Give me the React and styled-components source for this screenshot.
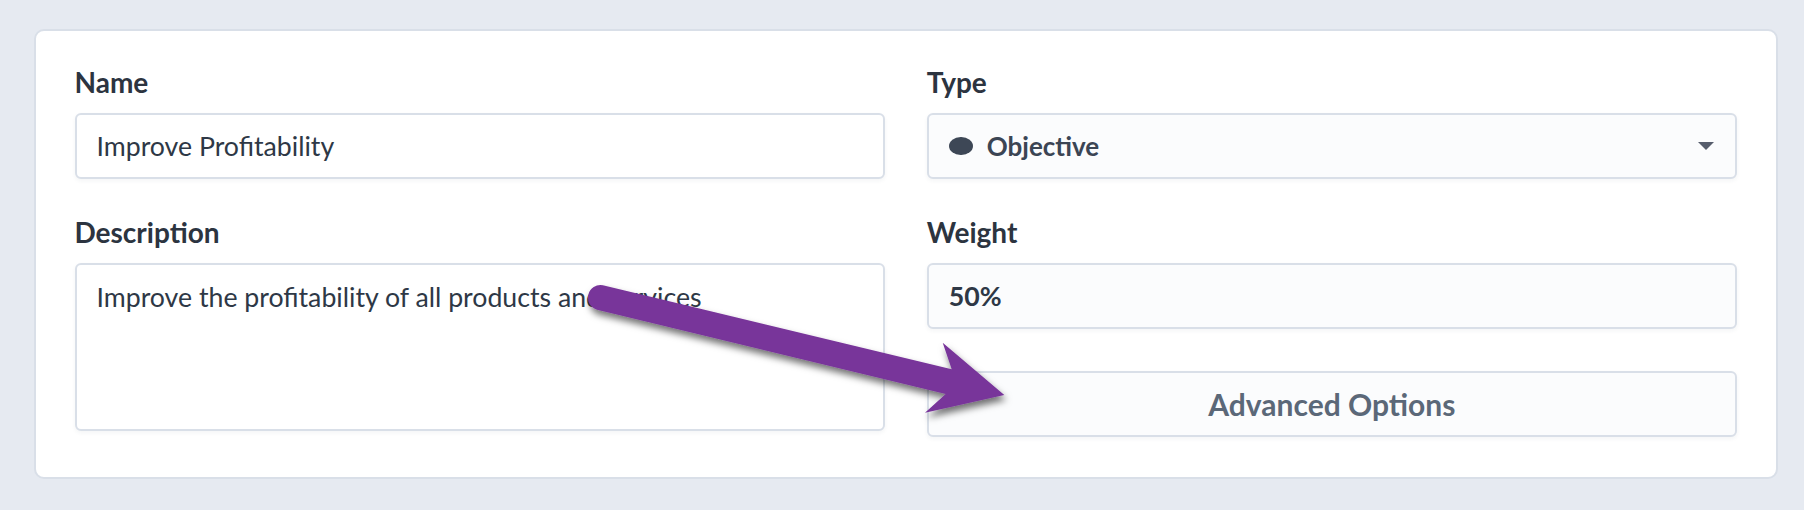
import React from "react";
import styled, { createGlobalStyle } from "styled-components";

const GlobalStyle = createGlobalStyle`
  html, body { margin: 0; padding: 0; background: #e6eaf1; }
  body { font-family: Lato, "Liberation Sans", sans-serif; }
  * { box-sizing: border-box; }
`;

const Page = styled.div`
  position: relative;
  min-height: 510px;
  padding: 29px 26px 31px 33.5px;
  background: #e6eaf1;
`;

const Card = styled.div`
  background: #ffffff;
  border: 2px solid #d9dfe8;
  border-radius: 10px;
  padding: 33.7px 39px 39.8px 39px;
`;

const Grid = styled.div`
  display: grid;
  grid-template-columns: 1fr 1fr;
  column-gap: 42px;
  row-gap: 35.5px;
  align-items: start;
`;

const Field = styled.div`
  display: flex;
  flex-direction: column;
`;

const Stack = styled.div`
  display: flex;
  flex-direction: column;
  gap: 42px;
`;

const Label = styled.label`
  font-family: Lato, sans-serif;
  font-weight: 700;
  font-size: 28px;
  line-height: 34px;
  color: #2c3440;
  margin-bottom: 14px;
`;

const boxBase = `
  width: 100%;
  border: 2px solid #d9dfe8;
  border-radius: 6px;
  box-shadow: 0 2px 4px rgba(40, 55, 80, 0.05);
  font-family: Lato, sans-serif;
  outline: none;
  margin: 0;
`;

const TextInput = styled.input`
  ${boxBase}
  height: 66.5px;
  padding: 0 20px;
  background: ${(p) => (p.$muted ? "#fbfcfd" : "#ffffff")};
  font-size: 26.7px;
  font-weight: ${(p) => (p.$bold ? 700 : 400)};
  color: #2e3846;
`;

const TextArea = styled.textarea`
  ${boxBase}
  height: 168px;
  padding: 12px 20px;
  background: #ffffff;
  font-size: 26.7px;
  line-height: 40px;
  color: #2e3846;
  resize: none;
  overflow: hidden;
`;

const Select = styled.div`
  ${boxBase}
  height: 66.5px;
  padding: 0 21px 0 20px;
  background: #fbfcfd;
  display: flex;
  align-items: center;
  cursor: pointer;
`;

const Dot = styled.span`
  width: 24px;
  height: 18.5px;
  border-radius: 50%;
  background: ${(p) => p.$color};
  margin-right: 14px;
  flex: none;
`;

const SelectText = styled.span`
  flex: 1;
  font-size: 26px;
  font-weight: 700;
  color: #3b4554;
`;

const Caret = styled.span`
  width: 0;
  height: 0;
  border-left: 8px solid transparent;
  border-right: 8px solid transparent;
  border-top: 8px solid #565d6c;
`;

const Button = styled.button`
  ${boxBase}
  height: 66px;
  background: #fbfcfd;
  font-size: 30px;
  font-weight: 700;
  color: #5b6878;
  cursor: pointer;
`;

const Overlay = styled.svg`
  position: absolute;
  left: 0;
  top: 0;
  pointer-events: none;
  overflow: visible;
`;

function Arrow() {
  const d =
    "M 602.9 285.35 L 951.7 369.3 L 942.7 342.7 L 1004.3 395 L 925 412.7 L 945.7 394 L 597.1 309.65 A 12.5 12.5 0 0 1 602.9 285.35 Z";
  return (
    <Overlay width="1804" height="510" viewBox="0 0 1804 510">
      <defs>
        <filter id="arrowShadow" x="-20%" y="-50%" width="140%" height="200%">
          <feDropShadow dx="2" dy="5" stdDeviation="3.5" floodColor="#000" floodOpacity="0.55" />
        </filter>
      </defs>
      <path d={d} fill="#78359a" filter="url(#arrowShadow)" />
    </Overlay>
  );
}

export default function App() {
  return (
    <>
      <GlobalStyle />
      <Page>
        <Card>
          <Grid>
            <Field>
              <Label>Name</Label>
              <TextInput readOnly defaultValue="Improve Profitability" />
            </Field>
            <Field>
              <Label>Type</Label>
              <Select>
                <Dot $color="#3d4756" />
                <SelectText>Objective</SelectText>
                <Caret />
              </Select>
            </Field>
            <Field>
              <Label>Description</Label>
              <TextArea readOnly defaultValue="Improve the profitability of all products and services" />
            </Field>
            <Stack>
              <Field>
                <Label>Weight</Label>
                <TextInput readOnly $muted $bold defaultValue="50%" />
              </Field>
              <Button type="button">Advanced Options</Button>
            </Stack>
          </Grid>
        </Card>
        <Arrow />
      </Page>
    </>
  );
}
